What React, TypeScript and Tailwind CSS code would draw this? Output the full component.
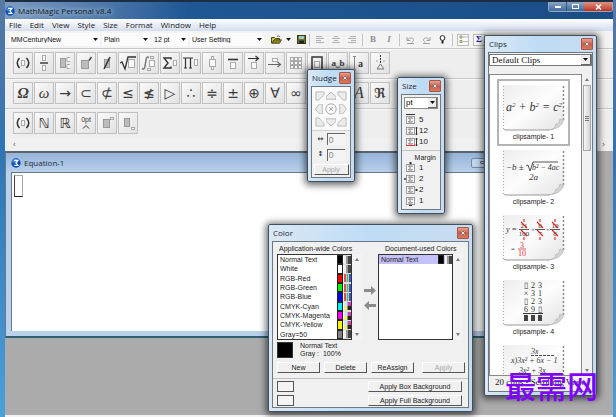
import type { ReactNode } from "react";
import clsx from "clsx";

const menus = ["File", "Edit", "View", "Style", "Size", "Format", "Window", "Help"];

const swatches = [
  { name: "Normal Text", color: "#000000", kind: "gray" },
  { name: "White", color: "#ffffff", kind: "gray" },
  { name: "RGB-Red", color: "#f00000", kind: "rgb" },
  { name: "RGB-Green", color: "#00f000", kind: "rgb" },
  { name: "RGB-Blue", color: "#0000e8", kind: "rgb" },
  { name: "CMYK-Cyan", color: "#00f0f8", kind: "cmyk" },
  { name: "CMYK-Magenta", color: "#f800f0", kind: "cmyk" },
  { name: "CMYK-Yellow", color: "#f8f800", kind: "cmyk" },
  { name: "Gray=50", color: "#808080", kind: "gray" },
];

const sans = "font-['Liberation_Sans',sans-serif]";
const serif = "font-['Liberation_Serif',serif]";

/* ---------- shared bits ---------- */

function Logo() {
  return (
    <svg width="10" height="10" viewBox="0 0 10 10" className="shrink-0">
      <circle cx="5" cy="5" r="4.7" fill="#0d4fb4" />
      <ellipse cx="4.2" cy="3.2" rx="3.2" ry="2.2" fill="#5a9be8" opacity=".6" />
      <path d="M3 2.4h4L4.9 4.8 7 7.4H3.2" fill="none" stroke="#fff" strokeWidth="1.1" />
    </svg>
  );
}

function Caret({ className }: { className?: string }) {
  return (
    <svg width="5" height="3" viewBox="0 0 5 3" className={clsx("pointer-events-none shrink-0", className)}>
      <path d="M0 0h5L2.5 3z" fill="#111" />
    </svg>
  );
}

function ScrollTick({ down }: { down?: boolean }) {
  return (
    <svg width="4" height="3" viewBox="0 0 4 3">
      <path d={down ? "M0 0h4L2 3z" : "M0 3h4L2 0z"} fill="#777" />
    </svg>
  );
}

function CloseButton() {
  return (
    <button
      aria-label="Close"
      className="flex h-3 w-3 shrink-0 items-center justify-center rounded-[1px] border border-[#a5564c] bg-linear-to-b from-[#e6a193] via-[#d2593f] to-[#d87a5e]"
    >
      <svg width="6" height="6" viewBox="0 0 6 6">
        <rect x=".5" y="1" width="5" height="4" rx="1" fill="#8d6a68" />
        <path d="M1.5 1.5l3 3M4.5 1.5l-3 3" stroke="#f4e4e0" strokeWidth="1" />
      </svg>
    </button>
  );
}

function FloatingWindow({ title, className, children }: { title: string; className: string; children: ReactNode }) {
  return (
    <section
      aria-label={title}
      className={clsx(
        "absolute flex flex-col rounded-[2px] border border-[#3c5060] bg-linear-to-r from-[#dbe8f5] via-[#bddcf5] to-[#c9dcee] px-[3px] pb-[3px] shadow-[0_1px_7px_2px_rgba(0,0,0,0.6)]",
        className
      )}
    >
      <header className="flex h-4 shrink-0 items-center justify-between pl-px">
        <h2 className="font-['Open_Sans',sans-serif] text-[8px] leading-4 text-[#1c2733]">{title}</h2>
        <CloseButton />
      </header>
      <div className="flex min-h-0 flex-1 flex-col border border-[#6d7a85] bg-[#f0f0f0]">{children}</div>
    </section>
  );
}

function PushButton({ children, disabled, className }: { children: ReactNode; disabled?: boolean; className?: string }) {
  return (
    <button
      disabled={disabled}
      className={clsx(
        "flex h-[11px] items-center justify-center border border-t-white border-r-[#555] border-b-[#555] border-l-white bg-[#f0f0f0] text-[7px] leading-none",
        disabled ? "text-[#a8a8a8]" : "text-[#222]",
        className
      )}
    >
      {children}
    </button>
  );
}

/* ---------- toolbar ---------- */

function ToolSelect({ label, value, className }: { label: string; value: string; className: string }) {
  return (
    <div className={clsx("relative flex h-[13px] shrink-0 items-center bg-[#fcfcfc]", className)}>
      <select aria-label={label} className="h-full w-full appearance-none pl-0.5 text-[7px] leading-none text-[#111] outline-none">
        <option>{value}</option>
      </select>
      <Caret className="absolute right-0.5" />
    </div>
  );
}

function Separator() {
  return <span className="h-3 w-px shrink-0 bg-[#c4c4c4]" />;
}

function IconButton({ label, pressed, children }: { label: string; pressed?: boolean; children: ReactNode }) {
  return (
    <button
      aria-label={label}
      className={clsx("flex h-3 w-3 shrink-0 items-center justify-center", pressed && "border border-[#bdbdbd] bg-[#fafafa]")}
    >
      {children}
    </button>
  );
}

function AlignIcon({ d }: { d: string }) {
  return (
    <svg width="8" height="8" viewBox="0 0 8 8">
      <path d={d} stroke="#b0b0b0" strokeWidth="1" />
    </svg>
  );
}

function Toolbar() {
  return (
    <div className="flex h-[17px] items-center overflow-hidden bg-[#f3f3f3] pl-1">
      <ToolSelect label="Font" value="MMCenturyNew" className="w-[91px]" />
      <ToolSelect label="Face" value="Plain" className="ml-0.5 w-12" />
      <ToolSelect label="Point size" value="12 pt" className="ml-0.5 w-9" />
      <ToolSelect label="Style set" value="User Setting" className="ml-0.5 w-[74px]" />
      <div className="flex items-center gap-1 pl-1.5">
        <IconButton label="Open">
          <svg width="11" height="9" viewBox="0 0 11 9">
            <path d="M.5 8V2.5h3l1 1h4V5" fill="#d8c84a" stroke="#4c4710" />
            <path d="M.8 8.3L3 4.8h7.5L8.4 8.3z" fill="#8c8420" stroke="#3c390c" strokeWidth=".8" />
            <path d="M6 1.5c1.3-1 2.4-.6 3 .6" fill="none" stroke="#333" strokeWidth=".8" />
          </svg>
        </IconButton>
        <Caret />
        <IconButton label="Save">
          <svg width="9" height="9" viewBox="0 0 9 9">
            <rect x=".5" y=".5" width="8" height="8" fill="#6d7a25" stroke="#333a1c" />
            <rect x="2" y="1" width="5" height="3" fill="#9cc8c4" />
            <rect x="2" y="5.5" width="5" height="3" fill="#222" />
          </svg>
        </IconButton>
      </div>
      <div className="flex items-center gap-1 pl-0.5">
        <Separator />
        <IconButton label="Align left"><AlignIcon d="M0 .5h6M0 2.5h8M0 4.5h5M0 6.5h8" /></IconButton>
        <IconButton label="Align center"><AlignIcon d="M2 .5h4M0 2.5h8M2 4.5h4M0 6.5h8" /></IconButton>
        <IconButton label="Align right"><AlignIcon d="M2 .5h6M0 2.5h8M3 4.5h5M0 6.5h8" /></IconButton>
        <Separator />
        <IconButton label="Bold"><b className={clsx(serif, "text-[9px] leading-none text-[#8e8e8e]")}>B</b></IconButton>
        <IconButton label="Italic"><i className={clsx(serif, "text-[9px] leading-none font-bold text-[#8e8e8e]")}>I</i></IconButton>
        <Separator />
        <IconButton label="Undo">
          <svg width="9" height="8" viewBox="0 0 9 8" fill="none" stroke="#a0a0a0">
            <path d="M1 1v3.5h3.5M1.5 4C3.5 1 7.5 1.5 7.5 4c0 1-1 2-2 2.5M1 7.5h7" />
          </svg>
        </IconButton>
        <IconButton label="Redo">
          <svg width="9" height="8" viewBox="0 0 9 8" fill="none" stroke="#a0a0a0">
            <path d="M8 1v3.5H4.500M7.500 4C5.500 1 1.500 1.500 1.500 4c0 1 1 2 2 2.500M1 7.500h7" />
          </svg>
        </IconButton>
        <IconButton label="Tips">
          <svg width="7" height="9" viewBox="0 0 7 9">
            <circle cx="3.5" cy="3" r="2.4" fill="#fff" stroke="#222" strokeWidth="1" />
            <path d="M2.5 5.5h2v3h-2z" fill="#222" />
          </svg>
        </IconButton>
        <Separator />
        <IconButton label="List" pressed>
          <svg width="9" height="9" viewBox="0 0 9 9">
            <path d="M1 1h2v2H1zM1 5.5h2v2H1z" fill="none" stroke="#8b9a55" />
            <path d="M4.5 2H9M4.5 6.5H9" stroke="#777" strokeDasharray="1 1" />
          </svg>
        </IconButton>
        <IconButton label="Sigma" pressed><b className={clsx(serif, "text-[9px] leading-none text-[#24249a]")}>Σ</b></IconButton>
      </div>
    </div>
  );
}

/* ---------- palettes ---------- */

function Glyph({ children, className }: { children: ReactNode; className?: string }) {
  return <span className={clsx("leading-none text-[#3a3a3a]", className)}>{children}</span>;
}

function Tpl({ children }: { children: ReactNode }) {
  return (
    <svg width="18" height="20" viewBox="0 0 18 20" fill="none" stroke="#333">
      {children}
    </svg>
  );
}

const box = { stroke: "#a9a9a9", fill: "#fafafa" };
const solid = { stroke: "#999", fill: "#bcbcbc" };
const math = "font-['DejaVu_Sans',sans-serif] text-[14px]";

const templateRow: [string, ReactNode][] = [
  ["Fences", <Tpl><path d="M5.5 5Q1 10 5.5 15M12.5 5q4.500 5 0 10" strokeWidth="1.500" /><rect x="7.500" y="7.500" width="3" height="5" {...box} /></Tpl>],
  ["Fraction", <Tpl><path d="M5 10h8" strokeWidth="1.4" /><rect x="7.5" y="2.5" width="3" height="5" {...box} /><rect x="7.5" y="12.5" width="3" height="5" {...box} /></Tpl>],
  ["Scripts", <Tpl><rect x="4.5" y="5.5" width="5" height="9" {...solid} /><path d="M14 4.5h-3v4h3M14 11.5h-3v4h3" {...box} /></Tpl>],
  ["Prime", <Tpl><rect x="4.5" y="7.5" width="7" height="8" {...solid} /><path d="M14.5 4L12 7.5" strokeWidth="1.3" /></Tpl>],
  ["Slash", <Tpl><rect x="6.5" y="6.5" width="5" height="8" {...solid} /><path d="M12 4L6 16" strokeWidth="1.5" /></Tpl>],
  ["Root", <Tpl><path d="M1 10l2-1 3 7L9 4h8" strokeWidth="1.3" /><rect x="9.5" y="6.5" width="6" height="8" {...box} /></Tpl>],
  ["Integral", <Tpl><path d="M9 4.5Q6.5 3 6 7L5 13q-.5 4-3 2.5" stroke="#777" strokeWidth="1.5" /><rect x="9.5" y="7.5" width="5" height="6" {...box} /><rect x="10.5" y="3.5" width="3" height="2" {...box} /><rect x="7.5" y="15.5" width="3" height="2" {...box} /></Tpl>],
  ["Sum", <Tpl><path d="M10 6.5V5H3l4 5-4 5h7v-1.5" strokeWidth="1.4" /><rect x="12.5" y="7.5" width="3" height="5" {...box} /></Tpl>],
  ["Product", <Tpl><path d="M1 5h10M3.5 5v10M8.5 5v10M2 15h3M7 15h3" strokeWidth="1.2" /><rect x="12.5" y="6.5" width="3" height="6" {...box} /></Tpl>],
  ["Stack", <Tpl><rect x="6.5" y="6.5" width="6" height="7" {...box} /><rect x="8.5" y="3.5" width="2" height="3" {...box} /><rect x="8.5" y="13.5" width="2" height="3" {...box} /></Tpl>],
  ["Overbar", <Tpl><path d="M4 6.5h10" strokeWidth="1.6" /><rect x="6.5" y="9.5" width="5" height="6" {...box} /></Tpl>],
  ["Over arrow", <Tpl><path d="M3 5.5h10M10.5 3l3 2.5-3 2.5" strokeWidth="1.2" /><rect x="6.5" y="9.5" width="5" height="6" {...box} /></Tpl>],
  ["Long arrow", <Tpl><path d="M2 11.5h12M11.5 9l3 2.5-3 2.5" stroke="#666" strokeWidth="1.2" /><rect x="6.5" y="5.5" width="5" height="3" {...box} /></Tpl>],
  ["Matrix", <Tpl>{[4.5, 8.5, 12.5].map((y) => [3.5, 7.5, 11.5].map((x) => <rect key={`${x}-${y}`} x={x} y={y} width="3" height="3" {...box} />))}</Tpl>],
  ["Frame", <Tpl><rect x="4" y="4" width="10" height="13" strokeWidth="1.5" /><rect x="6.5" y="8.5" width="5" height="6" {...box} /></Tpl>],
  ["Spacing", <Glyph className={clsx(serif, "text-[9px] font-bold")}>a˽b</Glyph>],
  ["Text", <Tpl><path d="M4.5 4v13M3 3.5h3M3 17h3" stroke="#888" /><text x="8" y="14" fill="#333" stroke="none" fontSize="10" fontWeight="bold" fontFamily="Liberation Serif">a</text></Tpl>],
  ["Ruler", <Tpl><path d="M9.5 2v9" strokeDasharray="2 1" /><path d="M6 16l3.5-5 3.5 5z" stroke="#777" /><path d="M5 8h2M12 8h2" stroke="#aaa" /></Tpl>],
];

const symbolRow: [string, ReactNode][] = [
  ["Greek capitals", <Glyph className={clsx(serif, "text-[15px] font-bold italic")}>Ω</Glyph>],
  ["Greek", <Glyph className={clsx(serif, "text-[15px] italic")}>ω</Glyph>],
  ["Arrows", <Glyph className={math}>→</Glyph>],
  ["Sets", <Glyph className={math}>⊂</Glyph>],
  ["Negated sets", <Glyph className={math}>⊄</Glyph>],
  ["Relations", <Glyph className={math}>≤</Glyph>],
  ["Negated relations", <Glyph className={math}>≰</Glyph>],
  ["Shapes", <Glyph className={math}>▷</Glyph>],
  ["Dots", <Glyph className={math}>∴</Glyph>],
  ["Division", <Glyph className={math}>≑</Glyph>],
  ["Plus minus", <Glyph className={math}>±</Glyph>],
  ["Operators", <Glyph className={math}>⊕</Glyph>],
  ["Logic", <Glyph className={math}>∀</Glyph>],
  ["Misc", <Glyph className={math}>∞</Glyph>],
  ["Brackets", <Glyph className={math}>∃</Glyph>],
  ["Accents", <Glyph className={math}>∂</Glyph>],
  ["Script", <Glyph className={clsx(serif, "text-[16px] italic")}>A</Glyph>],
  ["Fraktur", <Glyph className={clsx(math, "font-bold")}>ℜ</Glyph>],
];

const userRow: [string, ReactNode][] = [
  ["User fences", templateRow[0][1]],
  ["Naturals", <Glyph className={math}>ℕ</Glyph>],
  ["Reals", <Glyph className={math}>ℝ</Glyph>],
  ["Zero point", <Tpl><text x="9" y="9" textAnchor="middle" fill="#333" stroke="none" fontSize="7" fontFamily="Liberation Sans">0pt</text><path d="M6 15.5l3-3 3 3" /></Tpl>],
  ["Superscript", <Tpl><rect x="5.5" y="6.5" width="6" height="8" {...solid} /><rect x="12.5" y="4.5" width="3" height="2" {...box} /></Tpl>],
  ["Subscript", <Tpl><rect x="5.5" y="5.5" width="5" height="8" {...solid} /><rect x="12.5" y="14.5" width="3" height="2" {...box} /></Tpl>],
];

function PaletteRow({ items }: { items: [string, ReactNode][] }) {
  return (
    <div className="flex gap-px overflow-hidden border-t border-[#c6c6c6] bg-[#eeeeee] pt-[3px] pb-1 pl-2 shadow-[inset_0_1px_0_#fafafa]">
      {items.map(([label, icon]) => (
        <button
          key={label}
          aria-label={label}
          className="flex h-[22px] w-5 shrink-0 items-center justify-center border border-[#c0c0c0] bg-linear-to-br from-[#fafafa] to-[#e2e2e2]"
        >
          {icon}
        </button>
      ))}
    </div>
  );
}

/* ---------- floating windows ---------- */

const nudges = [
  { label: "Up left", d: "M1 1h9v3L4 10 1 10z" },
  { label: "Up", d: "M0 6l5.5-4.500L11 6v3H0z" },
  { label: "Up right", d: "M10 1H1v3l6 6h3z" },
  { label: "Left", d: "M5 0L.5 5.500 5 11h3V0z" },
  { label: "Reset", d: "" },
  { label: "Right", d: "M6 0l4.500 5.500L6 11H3V0z" },
  { label: "Down left", d: "M1 10h9V7L4 1H1z" },
  { label: "Down", d: "M0 5l5.500 4.500L11 5V2H0z" },
  { label: "Down right", d: "M10 10H1V7l6-6h3z" },
];

function NudgeWindow() {
  return (
    <FloatingWindow title="Nudge" className="top-[69px] left-[307px] h-[113px] w-[48px]">
      <div className="grid h-[44px] grid-cols-3 place-items-center border-b border-[#d0d0d0] bg-[#fafafa] px-0.5 py-0.5">
        {nudges.map((n) => (
          <button key={n.label} aria-label={n.label} className="flex h-3 w-3 items-center justify-center">
            {n.d ? (
              <svg width="10" height="10" viewBox="0 0 11 11">
                <path d={n.d} fill="#ececec" stroke="#b5b5b5" />
              </svg>
            ) : (
              <svg width="12" height="12" viewBox="0 0 12 12" fill="none" stroke="#aaa">
                <circle cx="6" cy="6" r="5.2" />
                <path d="M4 4l4 4M8 4L4 8" />
              </svg>
            )}
          </button>
        ))}
      </div>
      <div className="flex flex-1 flex-col items-center justify-between pt-0.5 pb-0.5">
        {["↔", "↕"].map((dir) => (
          <label key={dir} className="flex items-center gap-0.5 text-[7px] leading-none text-[#333]">
            <span className="w-[7px] font-['DejaVu_Sans',sans-serif] font-bold">{dir}</span>
            <input
              defaultValue="0"
              className="h-3 w-[18px] border-t border-l border-[#666] bg-[#f4f4f4] pl-px text-[9px] leading-none text-[#888] outline-none"
            />
          </label>
        ))}
        <PushButton disabled className="w-[35px]">Apply</PushButton>
      </div>
    </FloatingWindow>
  );
}

function SizeIcon({ marks, red }: { marks: string; red?: boolean }) {
  return (
    <svg width="14" height="11" viewBox="0 0 14 11" fill="none" className="shrink-0">
      <rect x="2.5" y="2.5" width="8" height="7" stroke="#999" fill="#f8f8f8" />
      <path d="M8.5 4.5V4h-4l2 2-2 2h4v-.5" stroke="#555" strokeWidth=".8" />
      {red && <path d="M2 9.5h9" stroke="#e03030" />}
      <path d={marks} stroke="#333" />
    </svg>
  );
}

const sizeRows = [
  { value: 5, marks: "M2 .5h9M3.5 0v1M9.5 0v1" },
  { value: 12, marks: "M12.5 2v8M11.5 3h2M11.5 9h2" },
  { value: 10, marks: "M12.5 2v8M11.5 3h2M11.5 9h2", red: true },
];
const marginRows = [
  { value: 1, marks: "M5 1h3M6.5 0v2" },
  { value: 2, marks: "M0 6h2M1 5v2" },
  { value: 2, marks: "M11 6h3M12.5 5v2" },
  { value: 1, marks: "M5 10.5h3" },
];

function SizeWindow() {
  return (
    <FloatingWindow title="Size" className="top-[77px] left-[397px] h-[137px] w-[48px]">
      <div className="relative mx-0.5 mt-0.5 flex h-3 shrink-0 items-center border border-[#8b8b8b] bg-white">
        <select aria-label="Unit" className="h-full w-full appearance-none pl-px text-[8px] leading-none outline-none">
          <option>pt</option>
        </select>
        <span className="pointer-events-none absolute right-0 flex h-full w-[9px] items-center justify-center border-r border-b border-[#666] bg-[#eee]">
          <Caret />
        </span>
      </div>
      <ul className="mt-[5px] border-b border-[#c4c4c4] pb-[3px] pl-0.5 text-[8px] text-[#222]">
        {sizeRows.map((r) => (
          <li key={r.value} className="flex h-[11px] items-center gap-px">
            <SizeIcon marks={r.marks} red={r.red} />
            {r.value}
          </li>
        ))}
      </ul>
      <p className="pt-0.5 pr-1 text-right text-[7px] leading-[9px] text-[#222]">Margin</p>
      <ul className="pl-0.5 text-[8px] text-[#222]">
        {marginRows.map((r, i) => (
          <li key={i} className="flex h-[11px] items-center gap-px">
            <SizeIcon marks={r.marks} />
            {r.value}
          </li>
        ))}
      </ul>
    </FloatingWindow>
  );
}

function KindIcon({ kind }: { kind: string }) {
  return (
    <svg width="7" height="8" viewBox="0 0 7 8">
      {kind === "gray" && (
        <>
          <rect width="3" height="8" fill="#eee" />
          <rect x="2" width="2" height="8" fill="#999" />
          <rect x="4" width="3" height="8" fill="#444" />
        </>
      )}
      {kind === "rgb" && (
        <>
          <rect width="2" height="8" fill="#e05050" />
          <rect x="2.5" width="2" height="8" fill="#50b070" />
          <rect x="5" width="2" height="8" fill="#3c50d0" />
        </>
      )}
      {kind === "cmyk" && (
        <>
          <rect width="3.5" height="4" fill="#bdeef2" />
          <rect x="3.5" width="3.5" height="4" fill="#d040b0" />
          <rect y="4" width="3.5" height="4" fill="#f0f070" />
          <rect x="3.5" y="4" width="3.5" height="4" fill="#222" />
        </>
      )}
    </svg>
  );
}

function ColorList({ title, items, selected }: { title: string; items: typeof swatches; selected?: boolean }) {
  return (
    <div className="w-[85px]">
      <h3 className={clsx("text-[7px] leading-[11px] whitespace-nowrap text-[#222]", selected ? "pl-[7px]" : "pl-0.5")}>{title}</h3>
      <div className="flex">
        <ul className="grid h-[86px] w-[75px] grid-rows-9 border border-[#333] bg-white">
          {items.map((s) => (
            <li key={s.name} className={clsx("flex min-h-0 items-center pl-0.5 text-[7px] leading-none text-[#222]", selected && "bg-[#c4c0f8]")}>
              <span className="flex-1 whitespace-nowrap">{s.name}</span>
              <span className="h-full w-1.5 border border-[#222]" style={{ backgroundColor: s.color }} />
              <span className="flex h-full w-2 items-center justify-center border-y border-[#ddd]">
                <KindIcon kind={s.kind} />
              </span>
            </li>
          ))}
        </ul>
        <div className="flex w-2.5 flex-col items-center justify-between bg-[#f3f3f3] py-1">
          <ScrollTick />
          <ScrollTick down />
        </div>
      </div>
    </div>
  );
}

function ColorWindow() {
  return (
    <FloatingWindow title="Color" className="top-[224px] left-[268px] h-[188px] w-[205px]">
      <div className="flex pt-px pl-1">
        <ColorList title="Application-wide Colors" items={swatches} />
        <div className="flex w-4 flex-col items-center justify-center gap-1.5 pt-3">
          {["M0 3h7V0l5 4.5L7 9V6H0z", "M12 3H5V0L0 4.5 5 9V6h7z"].map((d, i) => (
            <button key={d} aria-label={i === 0 ? "Copy to document" : "Copy to application"}>
              <svg width="12" height="9" viewBox="0 0 12 9">
                <path d={d} fill="#8c8c8c" />
              </svg>
            </button>
          ))}
        </div>
        <ColorList title="Document-used Colors" items={swatches.slice(0, 1)} selected />
      </div>
      <div className="flex gap-[7px] pt-0.5 pl-1 text-[7px] leading-2 text-[#222]">
        <span className="h-4 w-4 border border-[#333] bg-black" />
        <p className="whitespace-pre">{"Normal Text\nGray :  100%"}</p>
      </div>
      <div className="flex gap-1 border-b border-[#c0c0c0] pt-1 pb-[5px] pl-1">
        <PushButton className="w-[43px]">New</PushButton>
        <PushButton className="w-[43px]">Delete</PushButton>
        <PushButton className="w-[43px]">ReAssign</PushButton>
        <PushButton disabled className="ml-1 w-[43px]">Apply</PushButton>
      </div>
      <div className="flex flex-col gap-[3px] pt-0.5 pr-1.5 pl-1">
        {["Apply Box Background", "Apply Full Background"].map((t) => (
          <div key={t} className="flex items-center justify-between">
            <span className="h-[11px] w-[17px] border border-[#555] bg-[#f4f4f4]" />
            <PushButton className="w-[94px]">{t}</PushButton>
          </div>
        ))}
      </div>
    </FloatingWindow>
  );
}

function Paper({ children }: { children: ReactNode }) {
  return (
    <svg width="63" height="47" viewBox="0 0 63 47" fontFamily="Liberation Serif, serif" fill="#333" className="shrink-0">
      <defs>
        <linearGradient id="paper" x1="0" y1="0" x2="1" y2="1">
          <stop offset="0" stopColor="#ededed" />
          <stop offset=".5" stopColor="#fdfdfd" />
          <stop offset="1" stopColor="#e2e2e2" />
        </linearGradient>
      </defs>
      <path d="M1 1h61v34L47 46H3l-2-2z" fill="url(#paper)" />
      <path d="M1.5 2v42" stroke="#aaa" strokeDasharray="1 2" />
      <path d="M61.5 2v34" stroke="#888" strokeWidth="1.5" strokeDasharray="2 2" />
      <path d="M1 44q1 2 3 2h43" stroke="#999" fill="none" />
      <path d="M46 46q7-1 8-6 3 1 4-5 1 2 4 0-2 10-16 11z" fill="#d4d4d4" stroke="#aaa" strokeWidth=".6" />
      {children}
    </svg>
  );
}

function Frac({ x, top, bottom }: { x: number; top: string; bottom: string }) {
  return (
    <g textAnchor="middle" fontSize="7">
      <text x={x} y="14">{top}</text>
      <text x={x} y="22">{bottom}</text>
      <path d={`M${x - 5} 15.5h10`} stroke="#333" strokeWidth=".8" />
      <path d={`M${x - 3} 8l6 6M${x - 3} 16l6 6M${x} 5v3M${x} 23v3`} stroke="#d22" strokeWidth="1.1" />
    </g>
  );
}

const clips = [
  <Paper>
    <text x="4" y="27" fontSize="12" fontStyle="italic">
      a<tspan fontSize="7" dy="-4">2</tspan>
      <tspan dy="4"> + b</tspan>
      <tspan fontSize="7" dy="-4">2</tspan>
      <tspan dy="4"> = c</tspan>
      <tspan fontSize="7" dy="-4">2</tspan>
    </text>
  </Paper>,
  <Paper>
    <text x="4" y="21" fontSize="9" fontStyle="italic">−b ±</text>
    <path d="M24 17l2-1 2 6 3-9h25" fill="none" stroke="#444" strokeWidth=".9" />
    <text x="30" y="21" fontSize="8" fontStyle="italic">b² − 4ac</text>
    <text x="27" y="31" fontSize="9" fontStyle="italic">2a</text>
  </Paper>,
  <Paper>
    <text x="4" y="18" fontSize="8" fontStyle="italic">y =</text>
    <Frac x={22} top="21" bottom="100" />
    <text x="29" y="18" fontSize="7">×</text>
    <Frac x={38} top="8" bottom="7" />
    <text x="44" y="18" fontSize="7">×</text>
    <Frac x={53} top="10" bottom="8" />
    <text x="9" y="37" fontSize="7">=</text>
    <g fill="#d33" fontSize="8" textAnchor="middle">
      <text x="20" y="34">3</text>
      <text x="20" y="42">10</text>
      <path d="M16 35h8" stroke="#d33" strokeWidth=".8" />
    </g>
  </Paper>,
  <Paper>
    <g fontSize="8" textAnchor="middle">
      {["▯23", "×31", "▯23", "69▯"].map((row, r) =>
        row.split("").map((c, i) => (
          <text key={`${r}-${i}`} x={24 + i * 7} y={9 + r * 8}>{c}</text>
        ))
      )}
      <path d="M21 34.5h20" stroke="#333" />
      {[24, 31, 38].map((x) => <rect key={x} x={x - 2} y="36" width="4" height="6" fill="#444" />)}
    </g>
  </Paper>,
  <Paper>
    <g fontStyle="italic" fontSize="8">
      <text x="29" y="10">3x</text>
      <path d="M29 11.5h24" stroke="#444" strokeDasharray="3 1" />
      <text x="9" y="19">x)3x² + 6x − 1</text>
      <text x="17" y="29">3x² + 3x</text>
    </g>
  </Paper>,
];

function ClipsWindow() {
  return (
    <FloatingWindow title="Clips" className="top-[35px] right-[19px] h-[361px] w-[113px]">
      <div className={clsx(serif, "relative mt-px flex h-3 shrink-0 items-center border border-[#777] bg-white")}>
        <select aria-label="Clip set" className="h-full w-full appearance-none pl-0.5 text-[9px] leading-none text-[#111] outline-none">
          <option>Default Clips</option>
        </select>
        <span className="pointer-events-none absolute right-0 flex h-full w-[10px] items-center justify-center border-r border-b border-[#666] bg-[#eee]">
          <Caret />
        </span>
      </div>
      <div className="mt-2 flex min-h-0 flex-1">
        <ul className="w-[93px] overflow-hidden border border-[#888] bg-white pt-1 pl-[7px]">
          {clips.map((clip, i) => (
            <li key={i} className={clsx("mb-[-2px] flex h-[67px] w-[73px] flex-col items-center border-2 pt-[3px]", i === 0 ? "border-[#b4b4b4]" : "border-transparent")}>
              {clip}
              {i < 4 && <span className="text-[7px] leading-[12px] whitespace-nowrap text-[#222]">clipsample- {i + 1}</span>}
            </li>
          ))}
        </ul>
        <div className="flex flex-1 flex-col items-center bg-[#f1f1f1] py-1">
          <ScrollTick />
          <div className="mt-1 flex h-[66px] w-2 flex-col items-center justify-center gap-px border border-[#a5a5a5] bg-linear-to-r from-[#f6f6f6] to-[#d4d4d4]">
            <span className="h-px w-1 bg-[#777]" />
            <span className="h-px w-1 bg-[#777]" />
            <span className="h-px w-1 bg-[#777]" />
          </div>
          <span className="flex-1" />
          <ScrollTick down />
        </div>
      </div>
      <footer className={clsx(serif, "h-[15px] shrink-0 pl-1.5 text-[9px] leading-3 whitespace-nowrap text-[#222]")}>20 clips - Scrolling View</footer>
    </FloatingWindow>
  );
}

/* ---------- document ---------- */

function EquationWindow() {
  return (
    <section
      aria-label="Equation-1"
      className="mr-16 flex h-[187px] flex-col border-t-2 border-b-2 border-l border-t-[#5d646c] border-b-[#2f5f70] border-l-[#66788a] bg-[#b9d1ea] px-[5px] pb-[5px]"
    >
      <header className="-mx-[5px] flex h-[19px] shrink-0 items-center gap-[3px] bg-linear-to-b from-[#96b4d8] to-[#b8d0ea] px-[5px]">
        <Logo />
        <h2 className="flex-1 font-['Open_Sans',sans-serif] text-[8px] text-[#1d2c40]">Equation-1</h2>
        {["Minimize", "Restore", "Close"].map((b) => (
          <button key={b} aria-label={b} className="-ml-1 flex h-2.5 w-[25px] items-center justify-center rounded-[2px] border border-[#6f88a6] bg-[#c3d6ea]">
            <span className="h-[3px] w-2 rounded-[1px] border border-[#667]" />
          </button>
        ))}
      </header>
      <div className="flex-1 border-t border-l border-[#66788a] bg-white p-0.5">
        <div className="h-[22px] w-[9px] border border-[#aaa] border-b-[#222] border-l-[#444]" />
      </div>
    </section>
  );
}

function TitleBar() {
  return (
    <header className="flex h-[19px] shrink-0 items-center gap-[3px] border-t-2 border-[#1d2d42] bg-linear-to-r from-[#7d9cc0] via-[#1f5795] via-30% to-[#1b4d86]">
      <Logo />
      <h1 className="flex-1 font-['Open_Sans',sans-serif] text-[8px] text-[#0c1420] [text-shadow:0_0_4px_#c8dcf0,0_0_6px_#a5c2e0]">MathMagic Personal v8.4</h1>
      <div className="flex h-[10px] self-start overflow-hidden rounded-b-[3px] border border-t-0 border-[#93a9c4]">
        <button aria-label="Minimize" className="flex w-[18px] items-center justify-center border-r border-[#31557f] bg-linear-to-b from-[#8aa6c6] to-[#40699a]">
          <span className="h-0.5 w-1.5 bg-white" />
        </button>
        <button aria-label="Maximize" className="flex w-[17px] items-center justify-center bg-linear-to-b from-[#8aa6c6] to-[#40699a]">
          <span className="h-[5px] w-[7px] border border-white" />
        </button>
        <button aria-label="Close" className="flex w-[28px] items-center justify-center bg-linear-to-b from-[#d99386] to-[#bf2c14]">
          <svg width="7" height="6" viewBox="0 0 7 6">
            <path d="M1 .5l5 5M6 .5l-5 5" stroke="#fff" strokeWidth="1.5" />
          </svg>
        </button>
      </div>
    </header>
  );
}

export default function App() {
  return (
    <div
      className={clsx(
        sans,
        "relative flex min-h-screen flex-col overflow-hidden bg-linear-to-b from-[#5878a4] via-[#2f74b4] via-35% to-[#4ba0d8] pr-[3px] pl-[5px] text-[7px]"
      )}
    >
      <TitleBar />
      <nav className="flex h-3 shrink-0 items-center gap-2 bg-linear-to-b from-white to-[#d5dcee] pl-1 font-['Open_Sans',sans-serif] text-[8px] leading-3 text-[#1a1a1a]">
        {menus.map((m) => (
          <button key={m}>{m}</button>
        ))}
      </nav>
      <Toolbar />
      <PaletteRow items={templateRow} />
      <PaletteRow items={symbolRow} />
      <PaletteRow items={userRow} />
      <div className="flex h-[13px] shrink-0 items-center justify-between bg-[#f0f0f0] px-2 text-[8px] leading-none text-[#555]">
        <button aria-label="Scroll left">‹</button>
        <button aria-label="Scroll right">›</button>
      </div>
      <main className="flex-1 bg-[#ababab]">
        <EquationWindow />
      </main>
      <footer className="h-0.5 shrink-0 bg-[#f4f4f4]" />

      <NudgeWindow />
      <SizeWindow />
      <ColorWindow />
      <ClipsWindow />
      <p className="absolute right-[18px] bottom-[16px] font-['Noto_Sans_CJK_SC',sans-serif] text-[31px] leading-8 font-medium text-[#8000ff]">最需网</p>
    </div>
  );
}
